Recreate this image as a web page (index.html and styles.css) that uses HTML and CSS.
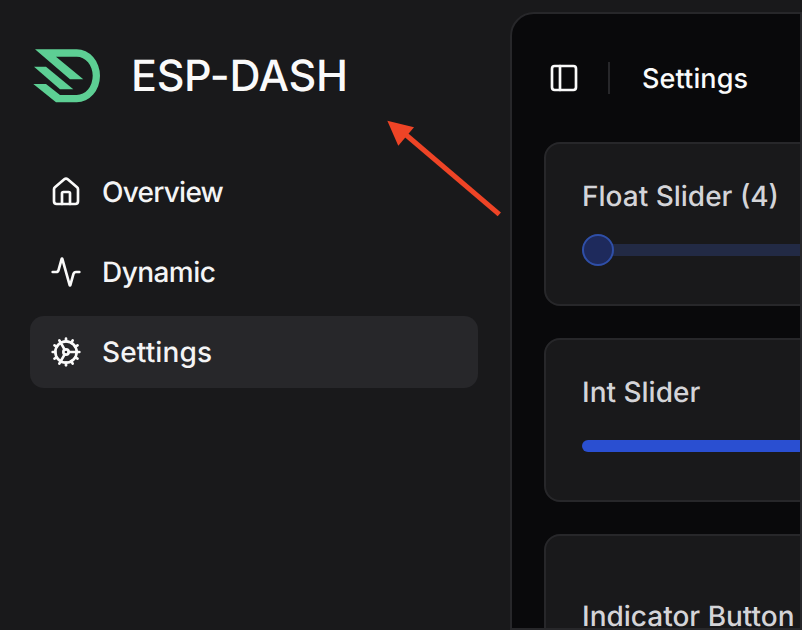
FILE: index.html
```html
<!DOCTYPE html>
<html lang="en">
<head>
<meta charset="utf-8">
<title>ESP-DASH</title>
<link rel="stylesheet" href="styles.css">
</head>
<body>
<aside class="sidebar">
  <div class="brand">
    <svg class="logo" viewBox="32 48 70 56" width="70" height="56">
      <path fill="#5dcf94" d="M35 49.3H76.7A23.3 26.5 0 0 1 76.7 102.3H56L33.3 84H46L60 95H76.7A16 19.15 0 0 0 76.7 56.7H56L83.3 79.3H70Z"/>
      <path fill="#5dcf94" d="M34 66.7H46L73.3 89.3H60Z"/>
    </svg>
    <span class="brand-name">ESP-DASH</span>
  </div>
  <nav class="nav">
    <a class="nav-item">
      <svg class="icon" viewBox="0 0 24 24"><path d="M15 21v-8a1 1 0 0 0-1-1h-4a1 1 0 0 0-1 1v8"/><path d="M3 10a2 2 0 0 1 .709-1.528l7-5.999a2 2 0 0 1 2.582 0l7 5.999A2 2 0 0 1 21 10v9a2 2 0 0 1-2 2H5a2 2 0 0 1-2-2z"/></svg>
      <span class="label-overview">Overview</span>
    </a>
    <a class="nav-item">
      <svg class="icon" viewBox="0 0 24 24"><path d="M22 12h-2.48a2 2 0 0 0-1.93 1.46l-2.35 8.36a.25.25 0 0 1-.48 0L9.24 2.18a.25.25 0 0 0-.48 0l-2.35 8.36A2 2 0 0 1 4.49 12H2"/></svg>
      <span class="label-dynamic">Dynamic</span>
    </a>
    <a class="nav-item active">
      <svg class="icon" viewBox="0 0 24 24"><path d="M12 20a8 8 0 1 0 0-16 8 8 0 0 0 0 16Z"/><path d="M12 14a2 2 0 1 0 0-4 2 2 0 0 0 0 4Z"/><path d="M12 2v2"/><path d="M12 22v-2"/><path d="m17 20.66-1-1.73"/><path d="M11 10.27 7 3.34"/><path d="m20.66 17-1.73-1"/><path d="m3.34 7 1.73 1"/><path d="M14 12h8"/><path d="M2 12h2"/><path d="m20.66 7-1.73 1"/><path d="m3.34 17 1.73-1"/><path d="m17 3.34-1 1.73"/><path d="m11 13.73-4 6.93"/></svg>
      <span class="label-settings">Settings</span>
    </a>
  </nav>
</aside>
<main class="main">
  <header class="topbar">
    <svg class="icon" viewBox="0 0 24 24"><rect width="18" height="18" x="3" y="3" rx="2"/><path d="M9 3v18"/></svg>
    <span class="divider"></span>
    <span class="page-title">Settings</span>
  </header>
  <section class="cards">
    <div class="card">
      <div class="card-title">Float Slider (4)</div>
      <div class="track">
        <span class="thumb"></span>
      </div>
    </div>
    <div class="card">
      <div class="card-title">Int Slider</div>
      <div class="track track-filled"></div>
    </div>
    <div class="card card-tall">
      <div class="card-title">Indicator Button</div>
    </div>
  </section>
</main>
<svg class="arrow" viewBox="0 0 802 630" width="802" height="630">
  <path class="arrow-line" d="M499.3 214.3L405 134"/>
  <path class="arrow-head" d="M387.3 120.7L414 127.3L398.3 145.7Z"/>
</svg>
</body>
</html>
```
FILE: styles.css
```css
* {
  box-sizing: border-box;
}

html,
body {
  height: 100%;
}

body {
  margin: 0;
  display: flex;
  overflow: hidden;
  background: #19191b;
  color: #fafafa;
  font-family: Inter, "Liberation Sans", sans-serif;
  font-optical-sizing: none;
  font-kerning: normal;
  text-rendering: geometricPrecision;
}

.sidebar {
  flex: 0 0 510px;
  padding: 0 32px 0 30px;
}

.brand {
  display: flex;
  align-items: center;
  height: 156px;
  padding: 0 0 4px 2px;
}

.logo {
  flex: none;
}

.brand-name {
  margin-left: 29px;
  font-size: 43px;
  font-weight: 550;
  letter-spacing: -0.3px;
  white-space: nowrap;
}

.nav {
  display: flex;
  flex-direction: column;
  gap: 8px;
}

.nav-item {
  display: flex;
  align-items: center;
  gap: 20px;
  height: 72px;
  padding-left: 20px;
  border-radius: 14px;
  font-size: 28px;
  font-weight: 500;
  color: #f4f4f5;
}

.nav-item.active {
  background: #27272a;
}

.label-overview {
  letter-spacing: -0.75px;
}

.label-dynamic {
  letter-spacing: -0.55px;
}

.label-settings {
  letter-spacing: 0.12px;
}

.icon {
  flex: none;
  width: 32px;
  height: 32px;
  fill: none;
  stroke: #fafafa;
  stroke-width: 2;
  stroke-linecap: round;
  stroke-linejoin: round;
}

.main {
  flex: 1;
  min-width: 0;
  margin-top: 12px;
  border: 2px solid #27272a;
  border-radius: 24px 0 0 0;
  background: #09090b;
  overflow: hidden;
}

.topbar {
  display: flex;
  align-items: center;
  height: 128px;
  padding-left: 36px;
}

.divider {
  width: 2px;
  height: 32px;
  margin: 0 32px 0 28px;
  background: #27272a;
}

.page-title {
  font-size: 27px;
  font-weight: 500;
  letter-spacing: 0.12px;
  white-space: nowrap;
}

.cards {
  display: flex;
  flex-direction: column;
  gap: 32px;
  width: 800px;
  padding-left: 32px;
}

.card {
  flex: none;
  height: 164px;
  padding: 38px 36px 0;
  border: 2px solid #27272a;
  border-radius: 16px;
  background: #19191b;
}

.card-tall {
  height: 200px;
  padding-top: 66px;
}

.card-title {
  font-size: 28px;
  font-weight: 500;
  line-height: 28px;
  color: #d4d4d8;
  white-space: nowrap;
}

.track {
  position: relative;
  height: 12px;
  margin-top: 34px;
  border-radius: 6px;
  background: #222a45;
}

.track-filled {
  background: #2a4fd1;
}

.thumb {
  position: absolute;
  top: -10px;
  left: 0;
  width: 32px;
  height: 32px;
  border: 2px solid #2f4fa8;
  border-radius: 50%;
  background: #1e2a5c;
}

.arrow {
  position: absolute;
  top: 0;
  left: 0;
  pointer-events: none;
}

.arrow-line {
  fill: none;
  stroke: #ee4426;
  stroke-width: 5;
}

.arrow-head {
  fill: #ee4426;
}
```
